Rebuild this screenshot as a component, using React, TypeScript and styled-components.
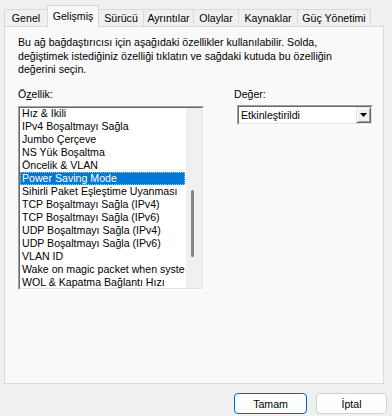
import React from "react";
import styled, { createGlobalStyle } from "styled-components";

const Global = createGlobalStyle`
  html, body { margin: 0; padding: 0; background: #f0f0f0; }
  body { font-family: "Liberation Sans", Arial, sans-serif; font-size: 10.6px; color: #000; }
`;

const Window = styled.div`
  width: 392px;
  height: 416px;
  box-sizing: border-box;
  padding: 0 8px 0 4px;
  display: flex;
  flex-direction: column;
  background: #f0f0f0;
  overflow: hidden;
`;

const TabStrip = styled.div`
  display: flex;
  align-items: flex-end;
  height: 27px;
  position: relative;
  z-index: 1;
`;

const Tab = styled.div<{ $active?: boolean; $w: number }>`
  box-sizing: border-box;
  width: ${(p) => p.$w}px;
  height: ${(p) => (p.$active ? 22 : 18)}px;
  padding-top: ${(p) => (p.$active ? 3 : 1)}px;
  text-align: center;
  border: 1px solid #d9d9d9;
  border-bottom: ${(p) => (p.$active ? "none" : "1px solid #d9d9d9")};
  margin-left: -1px;
  background: ${(p) => (p.$active ? "#f9f9f9" : "#f0f0f0")};
  position: relative;
  z-index: ${(p) => (p.$active ? 2 : 1)};
  white-space: nowrap;
  line-height: 14px;
  &:first-child { margin-left: 0; }
`;

const Panel = styled.div`
  box-sizing: border-box;
  height: 358px;
  margin-top: -1px;
  border: 1px solid #d9d9d9;
  background: #f9f9f9;
  padding: 9px 9px 0 13px;
`;

const Description = styled.p`
  margin: 0;
  line-height: 13.5px;
`;

const Columns = styled.div`
  display: flex;
  gap: 30px;
  margin-top: 10px;
`;

const Column = styled.div<{ $width: number }>`
  width: ${(p) => p.$width}px;
  display: flex;
  flex-direction: column;
`;

const Label = styled.div<{ $gap: number }>`
  line-height: 14px;
  margin-bottom: ${(p) => p.$gap}px;
`;

const Mn = styled.span`
  text-decoration: underline;
`;

const Sunken = styled.div`
  border: 1px solid;
  border-color: #a0a0a0 #ffffff #ffffff #a0a0a0;
`;

const SunkenInner = styled.div`
  border: 1px solid;
  border-color: #696969 #e3e3e3 #e3e3e3 #696969;
  background: #fff;
  display: flex;
`;

const ListBody = styled.div`
  height: 180px;
  flex: 1;
  overflow: hidden;
  padding-right: 1px;
`;

const Item = styled.div<{ $selected?: boolean }>`
  box-sizing: border-box;
  height: 13px;
  line-height: 13px;
  padding-left: 2px;
  white-space: nowrap;
  overflow: hidden;
  background: ${(p) => (p.$selected ? "#0078d7" : "transparent")};
  color: ${(p) => (p.$selected ? "#fff" : "#000")};
  outline: ${(p) => (p.$selected ? "1px dotted #9ccaf0" : "none")};
  outline-offset: -1px;
  &:first-child { margin-top: -1px; }
`;

const ScrollTrack = styled.div`
  width: 16px;
  background: #f0f0f0;
  position: relative;
`;

const ScrollThumb = styled.div`
  position: absolute;
  left: 5px;
  top: 82px;
  width: 3px;
  height: 67px;
  border-radius: 2px;
  background: #858585;
`;

const ComboBox = styled(Sunken)`
  margin-left: 3px;
`;

const ComboInner = styled(SunkenInner)`
  height: 16px;
  align-items: stretch;
`;

const ComboText = styled.div`
  flex: 1;
  line-height: 16px;
  padding-left: 2px;
`;

const ComboButton = styled.div`
  width: 15px;
  box-sizing: border-box;
  border: 1px solid;
  border-color: #e3e3e3 #696969 #696969 #e3e3e3;
  box-shadow: inset 1px 1px #ffffff, inset -1px -1px #a0a0a0;
  background: #f0f0f0;
  display: flex;
  align-items: center;
  justify-content: center;
`;

const Footer = styled.div`
  display: flex;
  justify-content: flex-end;
  gap: 9px;
  padding: 9px 1px 0 0;
  margin-right: -4px;
`;

const Button = styled.button<{ $default?: boolean }>`
  box-sizing: border-box;
  width: ${(p) => (p.$default ? 73 : 71)}px;
  height: 21px;
  font-family: "Liberation Sans", Arial, sans-serif;
  font-size: 10.6px;
  color: #000;
  background: #fdfdfd;
  border: 1px solid ${(p) => (p.$default ? "#0067c0" : "#d0d0d0")};
  border-radius: 4px;
  padding: 0;
`;

const items = [
  "Hız & İkili",
  "IPv4 Boşaltmayı Sağla",
  "Jumbo Çerçeve",
  "NS Yük Boşaltma",
  "Öncelik & VLAN",
  "Power Saving Mode",
  "Sihirli Paket Eşleştime Uyanması",
  "TCP Boşaltmayı Sağla (IPv4)",
  "TCP Boşaltmayı Sağla (IPv6)",
  "UDP Boşaltmayı Sağla (IPv4)",
  "UDP Boşaltmayı Sağla (IPv6)",
  "VLAN ID",
  "Wake on magic packet when system is in the S0ix power state",
  "WOL & Kapatma Bağlantı Hızı",
];

const tabs: [string, number][] = [
  ["Genel", 44],
  ["Gelişmiş", 52],
  ["Sürücü", 46],
  ["Ayrıntılar", 51],
  ["Olaylar", 46],
  ["Kaynaklar", 60],
  ["Güç Yönetimi", 74],
];

export default function App() {
  return (
    <>
      <Global />
      <Window>
        <TabStrip>
          {tabs.map(([t, w]) => (
            <Tab key={t} $w={w} $active={t === "Gelişmiş"}>
              {t}
            </Tab>
          ))}
        </TabStrip>
        <Panel>
          <Description>
            Bu ağ bağdaştırıcısı için aşağıdaki özellikler kullanılabilir. Solda,
            <br />
            değiştimek istediğiniz özelliği tıklatın ve sağdaki kutuda bu özelliğin
            <br />
            değerini seçin.
          </Description>
          <Columns>
            <Column $width={186}>
              <Label $gap={5}>
                Ö<Mn>z</Mn>ellik:
              </Label>
              <Sunken>
                <SunkenInner>
                  <ListBody>
                    {items.map((it) => (
                      <Item key={it} $selected={it === "Power Saving Mode"}>
                        {it}
                      </Item>
                    ))}
                  </ListBody>
                  <ScrollTrack>
                    <ScrollThumb />
                  </ScrollTrack>
                </SunkenInner>
              </Sunken>
            </Column>
            <Column $width={139}>
              <Label $gap={4}>
                De<Mn>ğ</Mn>er:
              </Label>
              <ComboBox>
                <ComboInner>
                  <ComboText>Etkinleştirildi</ComboText>
                  <ComboButton>
                    <svg width="7" height="4" viewBox="0 0 7 4">
                      <path d="M0 0h7L3.5 4z" fill="#000" />
                    </svg>
                  </ComboButton>
                </ComboInner>
              </ComboBox>
            </Column>
          </Columns>
        </Panel>
        <Footer>
          <Button $default>Tamam</Button>
          <Button>İptal</Button>
        </Footer>
      </Window>
    </>
  );
}
